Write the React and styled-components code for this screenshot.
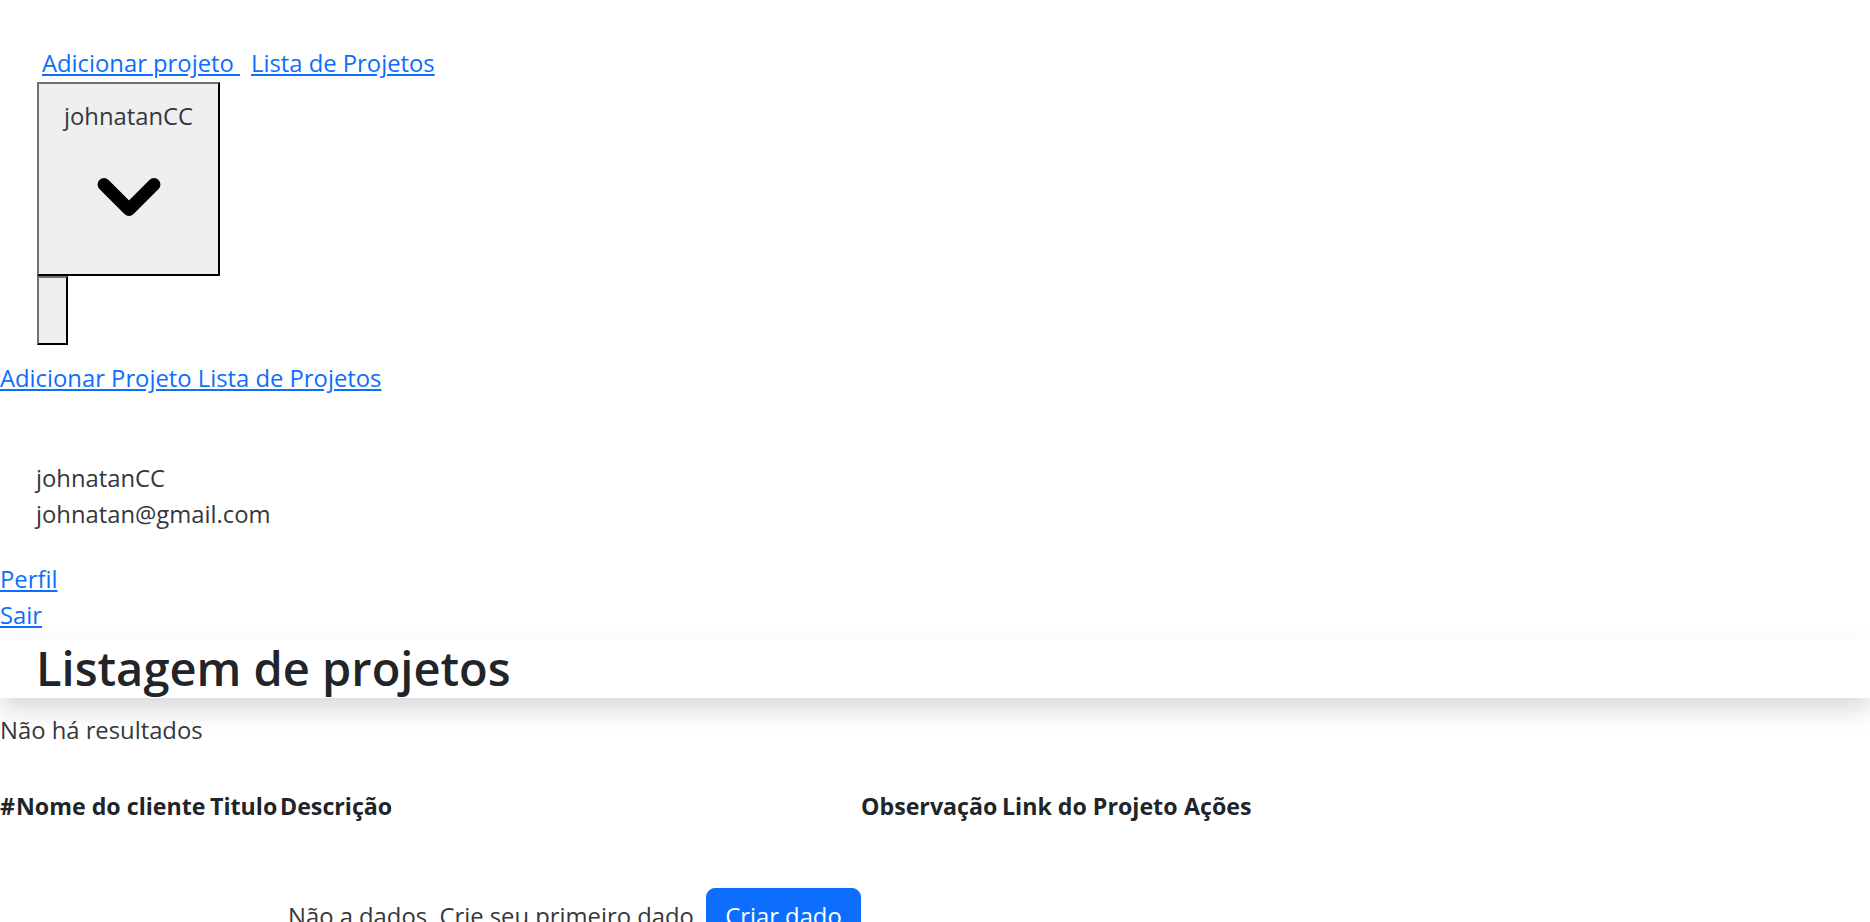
import React from "react";
import styled, { createGlobalStyle } from "styled-components";
import { ChevronDown } from "lucide-react";

const GlobalStyle = createGlobalStyle`
  html { scrollbar-width: none; }
  * { box-sizing: border-box; }
  body {
    margin: 0;
    background: #fff;
    color: #34383d;
    font-family: "Open Sans", "Noto Sans", sans-serif;
    font-size: 23.8px;
    line-height: 36px;
  }
`;

const Page = styled.div`
  display: flex;
  flex-direction: column;
`;

const Link = styled.a`
  color: #0d6efd;
  text-decoration: underline;
  cursor: pointer;
`;

const BlockLink = styled(Link)`
  display: block;
  width: fit-content;
`;

const TopNav = styled.nav`
  display: flex;
  gap: 11px;
  padding: 45px 0 0 42px;
`;

const UserMenu = styled.div`
  display: flex;
  flex-direction: column;
  align-items: flex-start;
  padding-left: 37px;
  margin-top: 1px;
`;

const DropButton = styled.button`
  width: 183px;
  height: 194px;
  display: flex;
  flex-direction: column;
  align-items: center;
  padding: 14px 0 0;
  margin: 0;
  background: #efefef;
  border: 2px solid;
  border-color: #6f6f6f #000 #000 #6f6f6f;
  font: inherit;
  color: #34383d;
  cursor: pointer;
`;

const DropLabel = styled.span`
  display: block;
  line-height: 36px;
`;

const ChevronWrap = styled.span`
  display: flex;
  margin-top: 13px;
`;

const MenuPanel = styled.div`
  width: 31px;
  height: 69px;
  background: #efefef;
  border: 2px solid;
  border-color: #6f6f6f #000 #000 #6f6f6f;
`;

const MobileLinks = styled.div`
  margin-top: 15px;
`;

const UserInfo = styled.div`
  margin-top: 64px;
  padding-left: 36px;
`;

const MenuLinks = styled.div`
  margin-top: 29px;
`;

const Banner = styled.header`
  margin-top: 6px;
  background: #fff;
  box-shadow: 0 12px 24px rgba(0, 0, 0, 0.15);
`;

const Title = styled.h2`
  margin: 0;
  padding-left: 36px;
  font-size: 47px;
  font-weight: 600;
  line-height: 59px;
  color: #212529;
`;

const Status = styled.p`
  margin: 14px 0 0;
`;

const Table = styled.table`
  margin-top: 40px;
  width: 1258px;
  table-layout: fixed;
  border-collapse: collapse;
  border-spacing: 0;
`;

const Th = styled.th`
  width: ${(p) => p.$w}px;
  padding: 0;
  text-align: left;
  font-size: 23.2px;
  font-weight: 700;
  white-space: nowrap;
  line-height: 36px;
  color: #212529;
`;

const Td = styled.td`
  padding: 0;
`;

const EmptyCell = styled.td`
  padding: 64px 0 0 8px;
  white-space: nowrap;
`;

const PrimaryButton = styled.button`
  background: #0d6efd;
  color: #fff;
  border: 1px solid #0d6efd;
  border-radius: 9px;
  padding: 9px 18px;
  font: inherit;
  line-height: 36px;
  cursor: pointer;
`;

const columns = [
  ["#", 16],
  ["Nome do cliente", 194],
  ["Titulo", 70],
  ["Descrição", 581],
  ["Observação", 141],
  ["Link do Projeto", 182],
  ["Ações", 74],
];

export default function App() {
  return (
    <Page>
      <GlobalStyle />
      <TopNav>
        <Link>Adicionar projeto&nbsp;</Link>
        <Link>Lista de Projetos</Link>
      </TopNav>
      <UserMenu>
        <DropButton>
          <DropLabel>johnatanCC</DropLabel>
          <ChevronWrap>
            <ChevronDown size={100} strokeWidth={3.1} color="#000" />
          </ChevronWrap>
        </DropButton>
        <MenuPanel />
      </UserMenu>
      <MobileLinks>
        <Link>Adicionar Projeto </Link>
        <Link>Lista de Projetos</Link>
      </MobileLinks>
      <UserInfo>
        <div>johnatanCC</div>
        <div>johnatan@gmail.com</div>
      </UserInfo>
      <MenuLinks>
        <BlockLink>Perfil</BlockLink>
        <BlockLink>Sair</BlockLink>
      </MenuLinks>
      <Banner>
        <Title>Listagem de projetos</Title>
      </Banner>
      <Status>Não há resultados</Status>
      <Table>
        <thead>
          <tr>
            {columns.map(([label, w]) => (
              <Th key={label} $w={w}>
                {label}
              </Th>
            ))}
          </tr>
        </thead>
        <tbody>
          <tr>
            <Td />
            <Td />
            <Td />
            <EmptyCell>
              Não a dados. Crie seu primeiro dado.{" "}
              <PrimaryButton>Criar dado</PrimaryButton>
            </EmptyCell>
            <Td />
            <Td />
            <Td />
          </tr>
        </tbody>
      </Table>
    </Page>
  );
}
